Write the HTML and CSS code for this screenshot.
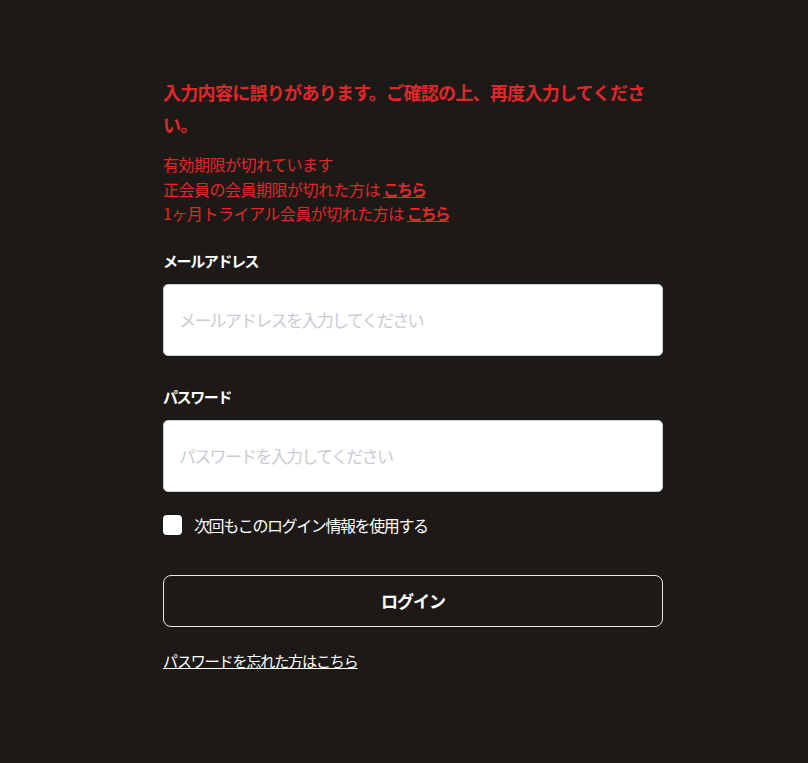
FILE: index.html
```html
<!DOCTYPE html>
<html lang="ja">
<head>
    <meta charset="UTF-8">
    <meta name="viewport" content="width=device-width, initial-scale=1.0">
    <title>ログイン</title>
    <link rel="stylesheet" href="styles.css">
</head>
<body>
    <div class="login">
        <p class="error-title">入力内容に誤りがあります。ご確認の上、再度入力してください。</p>
        <div class="error-list">
            <p>有効期限が切れています</p>
            <p>正会員の会員期限が切れた方は <a href="#">こちら</a></p>
            <p>1ヶ月トライアル会員が切れた方は <a href="#">こちら</a></p>
        </div>

        <form class="login-form" onsubmit="return false">
            <label class="field-label" for="email">メールアドレス</label>
            <input class="field-input" id="email" type="email" placeholder="メールアドレスを入力してください">

            <label class="field-label" for="password">パスワード</label>
            <input class="field-input" id="password" type="password" placeholder="パスワードを入力してください">

            <label class="remember">
                <input type="checkbox">
                <span class="remember-box"></span>
                <span>次回もこのログイン情報を使用する</span>
            </label>

            <button class="login-btn" type="submit">ログイン</button>
        </form>

        <a class="forgot" href="#">パスワードを忘れた方はこちら</a>
    </div>
</body>
</html>
```

FILE: styles.css
```css
:root {
    --bg: #1d1917;
    --red: #e0282b;
}

body {
    margin: 0;
    min-height: 100vh;
    background: var(--bg);
    color: #ffffff;
    font-family: "Noto Sans CJK JP", "Noto Sans", sans-serif;
}

.login {
    width: 500px;
    padding: 76px 0 40px 163px;
}

.error-title {
    margin: 0;
    color: var(--red);
    font-size: 18px;
    font-weight: 700;
    line-height: 32px;
    letter-spacing: -0.7px;
}

.error-list {
    margin-top: 12px;
    color: var(--red);
    font-size: 16px;
    line-height: 24.5px;
    letter-spacing: -0.5px;
}

.error-list p {
    margin: 0;
}

.error-list a {
    color: var(--red);
    font-weight: 700;
    letter-spacing: -2px;
    text-decoration: underline;
}

.login-form {
    display: flex;
    flex-direction: column;
    margin-top: 24px;
}

.field-label {
    font-size: 15px;
    font-weight: 700;
    line-height: 22px;
    letter-spacing: -1.4px;
    margin-bottom: 12px;
}

.field-input {
    box-sizing: border-box;
    width: 500px;
    height: 72px;
    padding: 0 15px;
    border: 1px solid #c9ccd3;
    border-radius: 5px;
    background: #ffffff;
    font-family: inherit;
    font-size: 17px;
    letter-spacing: -1.7px;
    color: #222;
    margin-bottom: 30px;
}

.field-input::placeholder {
    color: #c9ccd3;
}

.field-input:last-of-type {
    margin-bottom: 23px;
}

.remember {
    display: flex;
    align-items: center;
    gap: 12px;
    height: 20px;
    font-size: 16px;
    letter-spacing: -1.4px;
    cursor: pointer;
}

.remember input {
    display: none;
}

.remember-box {
    width: 19px;
    height: 20px;
    border-radius: 4px;
    background: #ffffff;
}

.login-btn {
    margin-top: 40px;
    height: 52px;
    border: 1px solid #e6e6e6;
    border-radius: 8px;
    background: transparent;
    color: #ffffff;
    font-family: inherit;
    font-size: 17px;
    font-weight: 700;
    letter-spacing: -1px;
    cursor: pointer;
}

.forgot {
    display: inline-block;
    margin-top: 23px;
    color: #ffffff;
    font-size: 15px;
    line-height: 22px;
    letter-spacing: -1.1px;
    text-decoration: underline;
}
```
